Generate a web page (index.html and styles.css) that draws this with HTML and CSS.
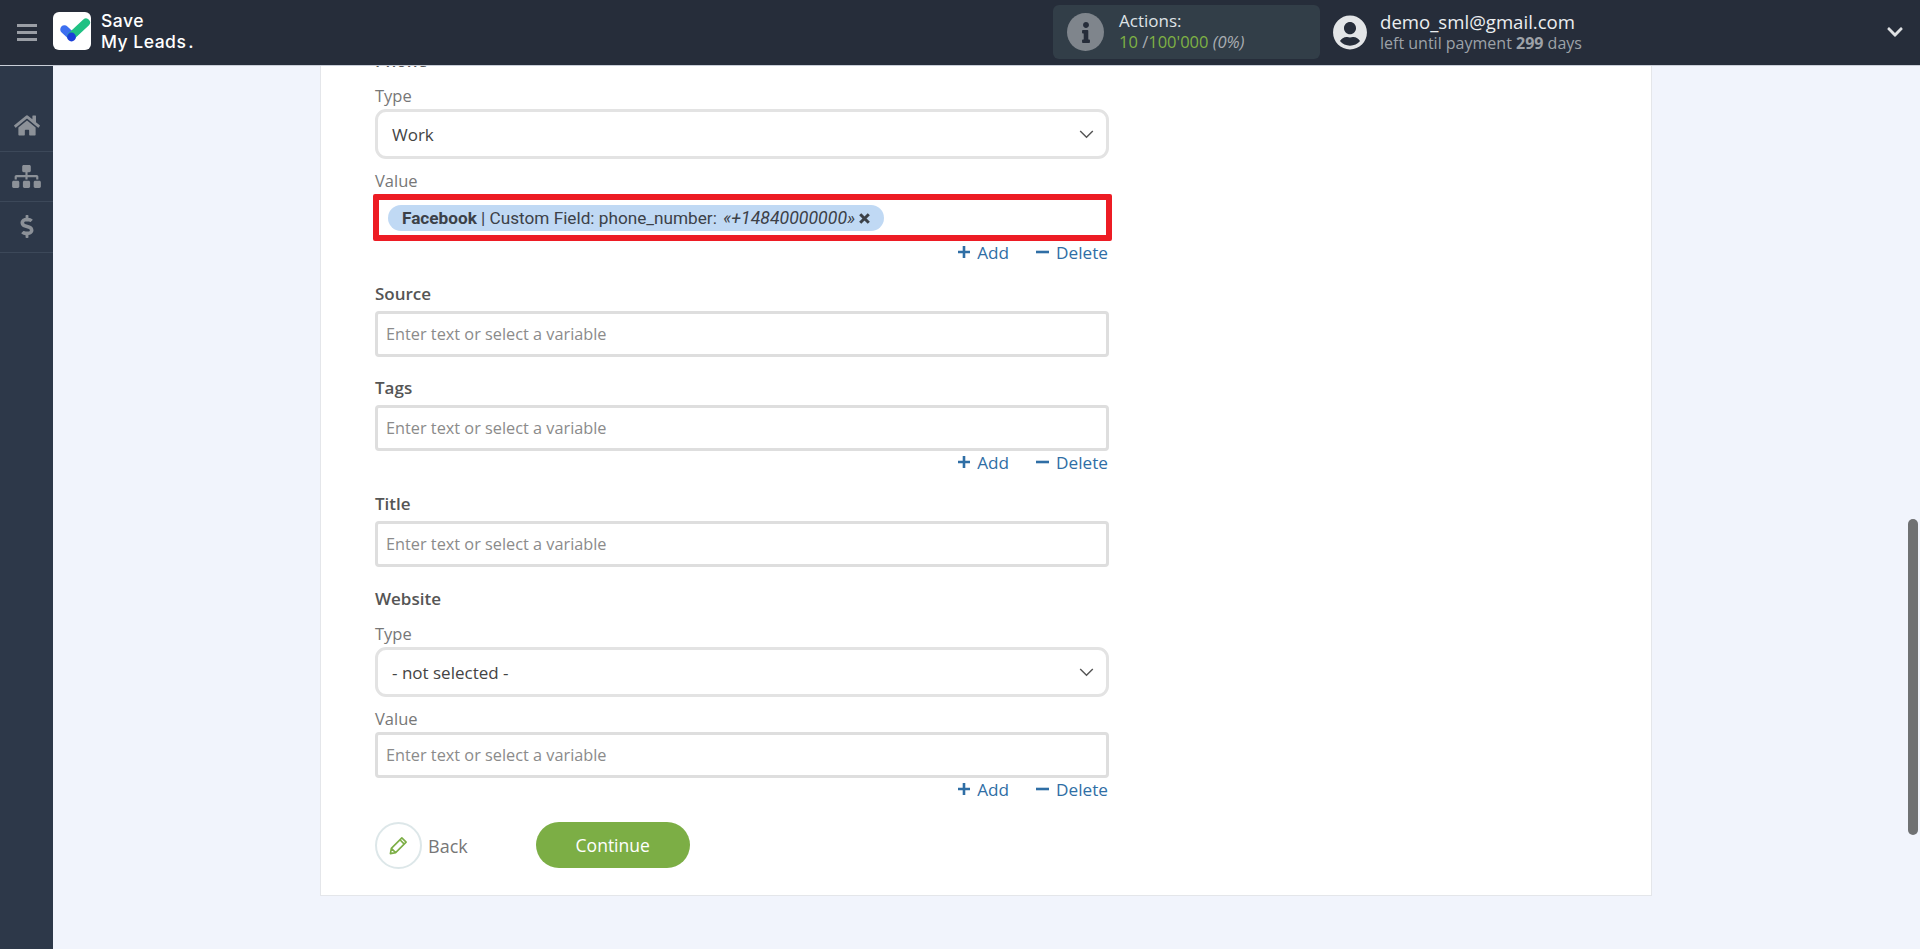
FILE: index.html
```html
<!DOCTYPE html>
<html lang="en">
<head>
    <meta charset="UTF-8">
    <title>Save My Leads</title>
    <link rel="stylesheet" href="styles.css">
</head>
<body>
    <header class="topbar">
        <button class="burger" type="button" aria-label="Menu">
            <span></span><span></span><span></span>
        </button>
        <a class="logo" href="#">
            <span class="logo-mark">
                <svg viewBox="0 0 38 38" width="38" height="38">
                    <path d="M11.5 17.5L18.5 24" stroke="#3d6ff0" stroke-width="8.5" stroke-linecap="round" fill="none"/>
                    <path d="M18.5 24L33 10.5" stroke="#20c183" stroke-width="8" stroke-linecap="round" fill="none"/>
                    <circle cx="18.5" cy="25" r="4.4" fill="#1b3fd8"/>
                </svg>
            </span>
            <span class="logo-text">Save<br>My Leads<i>.</i></span>
        </a>
        <div class="actions">
            <span class="actions-icon">
                <svg viewBox="0 0 192 512" width="8" height="21"><path fill="#262d3a" d="M20 424.229h20V279.771H20c-11.046 0-20-8.954-20-20V212c0-11.046 8.954-20 20-20h112c11.046 0 20 8.954 20 20v212.229h20c11.046 0 20 8.954 20 20V492c0 11.046-8.954 20-20 20H20c-11.046 0-20-8.954-20-20v-47.771c0-11.046 8.954-20 20-20zM96 0C56.235 0 24 32.235 24 72s32.235 72 72 72 72-32.235 72-72S135.764 0 96 0z"/></svg>
            </span>
            <div class="actions-text">
                <div class="actions-title">Actions:</div>
                <div class="actions-count"><b>10</b> <span class="slash">/</span><b>100'000</b> <em>(0%)</em></div>
            </div>
        </div>
        <div class="account">
            <svg viewBox="0 0 496 512" width="34" height="35"><path fill="#e3e5e7" d="M248 8C111 8 0 119 0 256s111 248 248 248 248-111 248-248S385 8 248 8zm0 96c48.6 0 88 39.4 88 88s-39.4 88-88 88-88-39.4-88-88 39.4-88 88-88zm0 344c-58.7 0-111.3-26.6-146.5-68.2 18.8-35.4 55.6-59.8 98.5-59.8 2.4 0 4.8.4 7.1 1.1 13 4.2 26.6 6.9 40.9 6.9 14.3 0 28-2.7 40.9-6.9 2.3-.7 4.7-1.1 7.1-1.1 42.9 0 79.7 24.4 98.5 59.8C359.3 421.4 306.7 448 248 448z"/></svg>
            <div class="account-text">
                <div class="account-mail">demo_sml@gmail.com</div>
                <div class="account-left">left until payment <b>299</b> days</div>
            </div>
        </div>
        <svg class="account-toggle" viewBox="0 0 448 512" width="16" height="18"><path fill="#dfe1e3" d="M207.029 381.476L12.686 187.132c-9.373-9.373-9.373-24.569 0-33.941l22.667-22.667c9.357-9.357 24.522-9.375 33.901-.04L224 284.505l154.745-154.021c9.379-9.335 24.544-9.317 33.901.04l22.667 22.667c9.373 9.373 9.373 24.569 0 33.941L240.971 381.476c-9.373 9.372-24.569 9.372-33.942 0z"/></svg>
    </header>

    <div class="layout">
        <nav class="sidebar">
            <a class="nav-item" href="#">
                <svg viewBox="0 0 576 512" width="26" height="23"><path d="M280.37 148.26L96 300.11V464a16 16 0 0 0 16 16l112.06-.29a16 16 0 0 0 15.92-16V368a16 16 0 0 1 16-16h64a16 16 0 0 1 16 16v95.64a16 16 0 0 0 16 16.05L464 480a16 16 0 0 0 16-16V300L295.67 148.26a12.19 12.19 0 0 0-15.3 0zM571.6 251.47L488 182.56V44.05a12 12 0 0 0-12-12h-56a12 12 0 0 0-12 12v72.61L318.47 43a48 48 0 0 0-61 0L4.34 251.47a12 12 0 0 0-1.6 16.9l25.5 31A12 12 0 0 0 45.15 301l235.22-193.74a12.19 12.19 0 0 1 15.3 0L530.9 301a12 12 0 0 0 16.9-1.6l25.5-31a12 12 0 0 0-1.7-16.93z"/></svg>
            </a>
            <a class="nav-item" href="#">
                <svg viewBox="0 0 640 512" width="29" height="23"><path d="M128 352H32c-17.67 0-32 14.33-32 32v96c0 17.67 14.33 32 32 32h96c17.67 0 32-14.33 32-32v-96c0-17.67-14.33-32-32-32zm-24-80h192v48h48v-48h192v48h48v-57.59c0-21.17-17.23-38.41-38.41-38.41H344v-64h40c17.67 0 32-14.33 32-32V32c0-17.67-14.33-32-32-32H256c-17.67 0-32 14.33-32 32v96c0 17.67 14.33 32 32 32h40v64H94.41C73.23 224 56 241.23 56 262.41V320h48v-48zm264 80h-96c-17.67 0-32 14.33-32 32v96c0 17.67 14.33 32 32 32h96c17.67 0 32-14.33 32-32v-96c0-17.67-14.33-32-32-32zm240 0h-96c-17.67 0-32 14.33-32 32v96c0 17.67 14.33 32 32 32h96c17.67 0 32-14.33 32-32v-96c0-17.67-14.33-32-32-32z"/></svg>
            </a>
            <a class="nav-item" href="#">
                <svg viewBox="0 0 288 512" width="14" height="23"><path d="M209.2 233.4l-108-31.6C88.7 198.2 80 186.5 80 173.5c0-16.3 13.2-29.5 29.5-29.5h66.3c12.2 0 24.2 3.7 34.2 10.5 6.1 4.1 14.3 3.1 19.5-2l34.8-34c7.1-6.9 6.1-18.4-1.8-24.5C238 74.8 207.4 64.1 176 64V16c0-8.8-7.2-16-16-16h-32c-8.8 0-16 7.2-16 16v48h-2.5C45.8 64-5.4 118.7.5 183.6c4.2 46.1 39.4 83.6 83.8 96.6l102.5 30c12.5 3.7 21.2 15.3 21.2 28.3 0 16.3-13.2 29.5-29.5 29.5h-66.3C100 368 88 364.3 78 357.5c-6.1-4.1-14.3-3.1-19.5 2l-34.8 34c-7.1 6.9-6.1 18.4 1.8 24.5 24.5 19.2 55.1 29.9 86.5 30v48c0 8.8 7.2 16 16 16h32c8.8 0 16-7.2 16-16v-48.2c46.6-.9 90.3-28.6 105.7-72.7 21.5-61.6-14.6-124.8-72.5-141.7z"/></svg>
            </a>
        </nav>

        <main class="content">
            <div class="card">
                <div class="form-title">Phone</div>
                <label class="form-label sub">Type</label>
                <div class="select">
                    <span>Work</span>
                    <svg viewBox="0 0 16 10" width="15" height="9"><polyline points="1,1 8,8 15,1" fill="none" stroke="#555" stroke-width="1.6"/></svg>
                </div>
                <label class="form-label sub">Value</label>
                <div class="input input-marked">
                    <span class="chip"><b>Facebook</b> | Custom Field: phone_number: <em>«+14840000000»</em><svg viewBox="0 0 11 11" width="11" height="11"><path d="M1.2 1.2L9.8 9.8M9.8 1.2L1.2 9.8" stroke="#3c4148" stroke-width="3"/></svg></span>
                </div>
                <div class="row-tools">
                    <a href="#"><svg viewBox="0 0 12 12" width="12" height="12"><path d="M6 0V12M0 6H12" stroke="#2f6ea5" stroke-width="2.6"/></svg>Add</a>
                    <a href="#"><svg viewBox="0 0 13 12" width="13" height="12"><path d="M0 6H13" stroke="#2f6ea5" stroke-width="2.6"/></svg>Delete</a>
                </div>

                <label class="form-label main">Source</label>
                <div class="input placeholder">Enter text or select a variable</div>

                <label class="form-label main after-input">Tags</label>
                <div class="input placeholder">Enter text or select a variable</div>
                <div class="row-tools">
                    <a href="#"><svg viewBox="0 0 12 12" width="12" height="12"><path d="M6 0V12M0 6H12" stroke="#2f6ea5" stroke-width="2.6"/></svg>Add</a>
                    <a href="#"><svg viewBox="0 0 13 12" width="13" height="12"><path d="M0 6H13" stroke="#2f6ea5" stroke-width="2.6"/></svg>Delete</a>
                </div>

                <label class="form-label main">Title</label>
                <div class="input placeholder">Enter text or select a variable</div>

                <div class="form-title after-input">Website</div>
                <label class="form-label sub">Type</label>
                <div class="select">
                    <span>- not selected -</span>
                    <svg viewBox="0 0 16 10" width="15" height="9"><polyline points="1,1 8,8 15,1" fill="none" stroke="#555" stroke-width="1.6"/></svg>
                </div>
                <label class="form-label sub">Value</label>
                <div class="input placeholder">Enter text or select a variable</div>
                <div class="row-tools">
                    <a href="#"><svg viewBox="0 0 12 12" width="12" height="12"><path d="M6 0V12M0 6H12" stroke="#2f6ea5" stroke-width="2.6"/></svg>Add</a>
                    <a href="#"><svg viewBox="0 0 13 12" width="13" height="12"><path d="M0 6H13" stroke="#2f6ea5" stroke-width="2.6"/></svg>Delete</a>
                </div>

                <div class="buttons">
                    <a class="btn-back" href="#">
                        <span class="btn-back-icon">
                            <svg viewBox="0 0 22 22" width="21" height="21"><path d="M2.5 19.5L3.5 14L14.5 3L19 7.5L8 18.5Z M12.5 5L17 9.5 M3.5 14L8 18.5" fill="none" stroke="#7cae45" stroke-width="1.7" stroke-linejoin="round"/></svg>
                        </span>
                        Back
                    </a>
                    <button class="btn-continue" type="button">Continue</button>
                </div>
            </div>
            <div class="scroll-thumb"></div>
        </main>
    </div>
</body>
</html>
```

FILE: styles.css
```css
/* Save My Leads - field mapping step */

* {
    box-sizing: border-box;
}

html, body {
    height: 100%;
}

body {
    margin: 0;
    display: flex;
    flex-direction: column;
    overflow: hidden;
    background-color: #f1f4fc;
    font-family: 'Open Sans', sans-serif;
    color: #444;
}

a {
    text-decoration: none;
    color: inherit;
}

/* top bar */

.topbar {
    flex: 0 0 66px;
    display: flex;
    align-items: center;
    position: relative;
    z-index: 2;
    background-color: #262d3a;
    border-bottom: 1px solid #c9ced8;
}

.burger {
    flex: 0 0 53px;
    height: 100%;
    padding: 0 16px 0 17px;
    border: none;
    background: none;
    display: flex;
    flex-direction: column;
    justify-content: center;
    gap: 4px;
}

.burger span {
    display: block;
    height: 3px;
    background-color: #9a9ea5;
}

.logo {
    flex: 0 0 150px;
    display: flex;
    align-items: center;
    gap: 10px;
    margin-bottom: 4px;
}

.logo-mark {
    width: 38px;
    height: 38px;
    background-color: #fff;
    border-radius: 6px;
    display: block;
}

.logo-mark svg {
    display: block;
}

.logo-text {
    font-family: 'Inter', sans-serif;
    font-weight: 500;
    font-size: 17.5px;
    line-height: 21px;
    letter-spacing: 0.5px;
    white-space: nowrap;
    color: #fff;
}

.logo-text i {
    font-style: normal;
    margin-left: 2px;
}

.actions {
    margin-left: 850px;
    margin-bottom: 1px;
    width: 267px;
    height: 54px;
    display: flex;
    align-items: center;
    gap: 15px;
    padding-left: 14px;
    background-color: #323e48;
    border-radius: 6px;
}

.actions-icon {
    width: 37px;
    height: 38px;
    border-radius: 50%;
    background-color: #7f858c;
    display: flex;
    align-items: center;
    justify-content: center;
}

.actions-text {
    margin-bottom: 2px;
}

.actions-title {
    font-size: 17px;
    line-height: 21px;
    color: #dfe3e6;
}

.actions-count {
    font-size: 16.5px;
    line-height: 21px;
    color: #a9adb2;
}

.actions-count b {
    font-weight: 400;
    color: #7fb244;
}

.actions-count .slash {
    color: #a9adb2;
}

.account {
    margin-left: 13px;
    margin-bottom: 1px;
    display: flex;
    align-items: center;
    gap: 13px;
}

.account svg {
    display: block;
}

.account-mail {
    font-size: 18.6px;
    line-height: 22px;
    color: #eceef0;
}

.account-left {
    font-size: 16px;
    line-height: 20px;
    color: #9da2a8;
}

.account-toggle {
    position: absolute;
    right: 17px;
    top: 23px;
}

/* sidebar */

.layout {
    flex: 1;
    min-height: 0;
    display: flex;
}

.sidebar {
    flex: 0 0 53px;
    padding-top: 35px;
    background-color: #2d3849;
}

.nav-item {
    height: 50.5px;
    display: flex;
    align-items: center;
    justify-content: center;
    border-bottom: 1px solid #3c4859;
}

.nav-item svg {
    fill: #8c9198;
}

/* form card */

.content {
    flex: 1;
    min-width: 0;
    position: relative;
    overflow: hidden;
    padding-left: 267px;
}

.card {
    width: 1332px;
    margin-top: -16px;
    padding: 0 0 26px 54px;
    background-color: #fff;
    border: 1px solid #e4e6ea;
    border-top: none;
}

.form-label,
.form-title {
    display: block;
    font-size: 16.5px;
    line-height: 22px;
}

.form-title,
.form-label.main {
    font-size: 17px;
    font-weight: 600;
    color: #555;
}

.form-title {
    margin-bottom: 13px;
}

.form-label.sub {
    color: #777;
    margin-bottom: 2px;
}

.form-label.main {
    margin-bottom: 6px;
}

.after-input {
    margin-top: 20px;
}

.form-title.after-input {
    margin-top: 21px;
}

.select {
    width: 734px;
    height: 50px;
    margin-bottom: 11px;
    padding: 0 12px 0 14px;
    display: flex;
    align-items: center;
    justify-content: space-between;
    border: 3px solid #e3e3e3;
    border-radius: 11px;
    font-size: 17px;
    color: #444;
}

.input {
    width: 734px;
    height: 46px;
    padding: 0 8px;
    display: flex;
    align-items: center;
    border: 3px solid #dedede;
    border-radius: 4px;
}

.placeholder {
    font-size: 16.3px;
    color: #8b8b8b;
}

.input-marked {
    width: 739px;
    height: 47px;
    margin-left: -2px;
    padding: 0 9px;
    border: 6px solid #ed1c24;
    border-radius: 2px;
}

.chip {
    height: 26px;
    padding: 0 14px;
    line-height: 26px;
    white-space: nowrap;
    background-color: #c0d9f4;
    border-radius: 13px;
    font-family: 'Roboto', sans-serif;
    font-size: 17.2px;
    color: #3c4148;
}

.chip em {
    font-size: 17.7px;
    margin-left: 2px;
}

.chip svg {
    margin-left: 4px;
}

.row-tools {
    width: 734px;
    height: 22px;
    margin-bottom: 20px;
    display: flex;
    justify-content: flex-end;
    align-items: center;
    gap: 27px;
    padding-right: 1px;
    font-size: 17.2px;
    color: #2f6ea5;
}

.row-tools a {
    display: flex;
    align-items: center;
    gap: 7px;
}

/* buttons */

.buttons {
    display: flex;
    align-items: flex-start;
    gap: 68px;
    margin-top: 22px;
}

.btn-back {
    display: flex;
    align-items: center;
    gap: 6px;
    font-size: 18px;
    color: #777;
}

.btn-back-icon {
    width: 47px;
    height: 47px;
    border: 2px solid #dde7e9;
    border-radius: 50%;
    display: flex;
    align-items: center;
    justify-content: center;
}

.btn-continue {
    width: 154px;
    height: 46px;
    border: none;
    border-radius: 23px;
    background-color: #7cae45;
    color: #fff;
    font-family: 'Open Sans', sans-serif;
    font-size: 17.5px;
}

.scroll-thumb {
    position: absolute;
    top: 453px;
    right: 2px;
    width: 10px;
    height: 316px;
    border-radius: 5px;
    background-color: #6f7173;
}
```
